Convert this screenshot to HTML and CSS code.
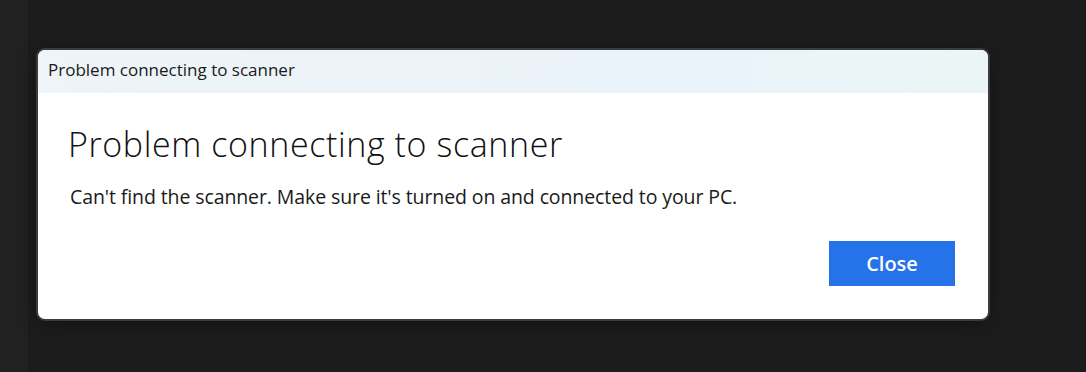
FILE: index.html
```html
<!DOCTYPE html>
<html lang="en">
<head>
  <meta charset="UTF-8">
  <title>Problem connecting to scanner</title>
  <link rel="stylesheet" href="styles.css">
</head>
<body>
  <div class="side-strip"></div>
  <div class="stage">
    <div class="dialog">
      <div class="title-bar">Problem connecting to scanner</div>
      <div class="content">
        <h1>Problem connecting to scanner</h1>
        <p class="message">Can't find the scanner. Make sure it's turned on and connected to your PC.</p>
        <div class="actions">
          <button class="close-btn">Close</button>
        </div>
      </div>
    </div>
  </div>
</body>
</html>
```

FILE: styles.css
```css
* {
  box-sizing: border-box;
  margin: 0;
  padding: 0;
}

body {
  font-family: 'Open Sans', 'Noto Sans', sans-serif;
  background: #1c1c1c;
  width: 1086px;
  height: 372px;
  display: flex;
  overflow: hidden;
}

.side-strip {
  width: 28px;
  background: #212121;
  flex-shrink: 0;
}

.stage {
  flex: 1;
  padding: 48px 0 0 8px;
}

.dialog {
  width: 954px;
  height: 273px;
  background: white;
  border: 2px solid #3c3c3c;
  border-radius: 9px;
  overflow: hidden;
  display: flex;
  flex-direction: column;
  box-shadow: 0 4px 20px rgba(0, 0, 0, 0.3);
}

.title-bar {
  height: 43px;
  background: linear-gradient(90deg, #eef4f7, #eaf3fa 70%, #ecf5f5);
  color: #1a1a1a;
  font-size: 17px;
  padding: 8px 0 0 10px;
}

.content {
  flex: 1;
  padding: 31px 33px 0 30px;
}

h1 {
  font-weight: 300;
  font-size: 34px;
  line-height: 40px;
  color: #111;
  letter-spacing: 0.6px;
}

.message {
  margin-top: 19px;
  margin-left: 2px;
  font-size: 19.5px;
  color: #1a1a1a;
  letter-spacing: -0.1px;
}

.actions {
  display: flex;
  justify-content: flex-end;
  margin-top: 31px;
}

.close-btn {
  width: 126px;
  height: 45px;
  border: none;
  background: #2672e8;
  color: white;
  font-family: inherit;
  font-size: 20px;
  font-weight: 600;
}
```
